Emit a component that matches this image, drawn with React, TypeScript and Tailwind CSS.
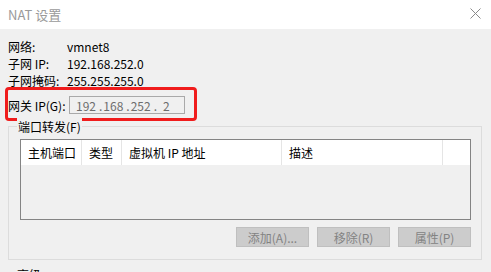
import React from 'react'

const font = { fontFamily: '"Noto Sans CJK SC", "Microsoft YaHei", sans-serif' }

function InfoRow({ label, value }: { label: string; value: string }) {
    return (
        <div className="flex h-[17px] items-center">
            <span className="w-[59px] shrink-0">{label}</span>
            <span>{value}</span>
        </div>
    )
}

const columns = [
    { title: '主机端口', width: 'w-[61px]' },
    { title: '类型', width: 'w-[40px]' },
    { title: '虚拟机 IP 地址', width: 'w-[160px]' },
    { title: '描述', width: 'w-[161px]' },
]

export default function App() {
    return (
        <div
            className="w-[491px] h-[272px] overflow-hidden bg-[#f0f0f0] text-[12px] leading-[17px] text-black"
            style={font}
        >
            {/* Title bar */}
            <div className="h-[29px] bg-white flex items-center justify-between pl-[8px] pr-[10px]">
                <span className="text-[13px] text-[#9a9a9a] -mt-[1px]">NAT 设置</span>
                <svg width="11" height="11" viewBox="0 0 11 11" className="-mt-[3px]">
                    <path d="M0.5 0.5 L10.5 10.5 M10.5 0.5 L0.5 10.5" stroke="#8a8a8a" strokeWidth="1" />
                </svg>
            </div>

            {/* Info */}
            <div className="pt-[9px] pl-[8px]">
                <InfoRow label="网络:" value="vmnet8" />
                <InfoRow label="子网 IP:" value="192.168.252.0" />
                <InfoRow label="子网掩码:" value="255.255.255.0" />

                {/* Gateway row with red highlight */}
                <div className="relative mt-[7px] flex h-[18px] items-center">
                    <span className="w-[61px] shrink-0">网关 IP(G):</span>
                    <div className="w-[116px] h-[18px] border border-[#a9a9a9] bg-[#f0f0f0] flex items-center pl-[6px] text-[#6d6d6d] whitespace-pre">
                        <span>192</span>
                        <span className="ml-[3px]">.</span>
                        <span className="ml-[1px]">168</span>
                        <span className="ml-[3px]">.</span>
                        <span className="ml-[1px]">252</span>
                        <span className="ml-[3px]">.</span>
                        <span className="ml-[6px]">2</span>
                    </div>
                    <div className="absolute left-[-3px] top-[-9px] w-[192px] h-[34px] border-[3px] border-[#f01c1c] rounded-[4px] pointer-events-none" />
                </div>
            </div>

            {/* Port forwarding group */}
            <div className="relative mt-[12px] ml-[8px] w-[474px] h-[134px] border border-[#dcdcdc] pt-[12px] pl-[11px] pr-[11px]">
                <span className="absolute left-[8px] top-[-9px] bg-[#f0f0f0] px-[1px] leading-[17px]">端口转发(F)</span>

                <div className="w-[451px] h-[81px] border border-[#848484] bg-[#f0f0f0]">
                    <div className="flex h-[25px] bg-white">
                        {columns.map(col => (
                            <div
                                key={col.title}
                                className={`${col.width} shrink-0 h-full border-r border-[#e5e5e5] flex items-center pl-[7px]`}
                            >
                                {col.title}
                            </div>
                        ))}
                    </div>
                </div>

                <div className="mt-[7px] flex justify-end gap-[8px] w-[451px]">
                    {['添加(A)...', '移除(R)', '属性(P)'].map(label => (
                        <div
                            key={label}
                            className="w-[73px] h-[20px] bg-[#cccccc] border border-[#bfbfbf] flex items-center justify-center text-[#838383]"
                        >
                            {label}
                        </div>
                    ))}
                </div>
            </div>

            <div className="pl-[17px] pt-[6px]">高级</div>
        </div>
    )
}
